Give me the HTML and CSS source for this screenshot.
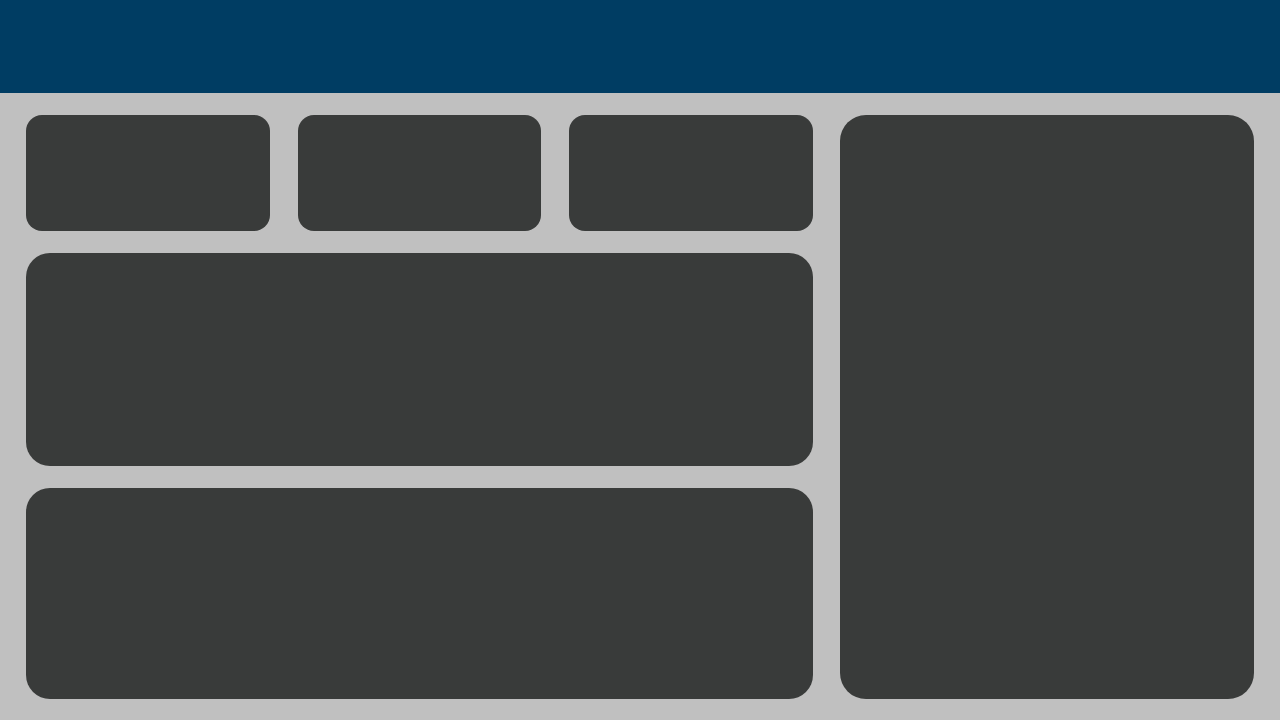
FILE: index.html
```html
<!DOCTYPE html>
<html>
<head>
<meta charset="utf-8">
<link rel="stylesheet" href="styles.css">
</head>
<body>
<header class="topbar"></header>
<main class="content">
  <section class="left">
    <div class="stats">
      <div class="card small"></div>
      <div class="card small"></div>
      <div class="card small"></div>
    </div>
    <div class="card wide top"></div>
    <div class="card wide bottom"></div>
  </section>
  <aside class="card side"></aside>
</main>
</body>
</html>
```

FILE: styles.css
```css
html, body {
  margin: 0;
  padding: 0;
  height: 100%;
}
body {
  background: #c0c0c0;
  font-family: "Liberation Sans", Arial, sans-serif;
  display: flex;
  flex-direction: column;
  overflow: hidden;
}
.topbar {
  height: 93px;
  background: #003d63;
  flex: none;
}
.content {
  flex: 1;
  display: flex;
  gap: 27px;
  padding: 22px 26px 21px;
  min-height: 0;
}
.left {
  width: 787px;
  display: flex;
  flex-direction: column;
  gap: 22px;
}
.stats {
  display: grid;
  grid-template-columns: 1fr 1fr 1fr;
  column-gap: 28px;
  height: 116px;
}
.card {
  background: #393b3a;
}
.small {
  border-radius: 16px;
}
.wide {
  border-radius: 24px;
}
.wide.top {
  height: 213px;
}
.wide.bottom {
  flex: 1;
}
.side {
  flex: 1;
  border-radius: 26px;
}
```
